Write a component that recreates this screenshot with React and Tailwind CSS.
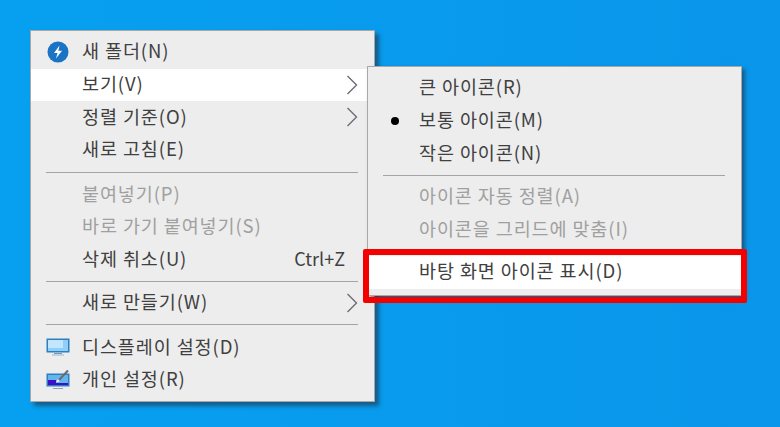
const font = "font-['Noto_Sans_CJK_KR','Noto_Sans',sans-serif]";

function Arrow() {
  return (
    <svg className="mr-[16px] shrink-0" width="12" height="20" viewBox="0 0 12 20" fill="none">
      <path d="M1.5 1 10.5 10 1.5 19" stroke="#6f6a78" strokeWidth="1.4" />
    </svg>
  );
}

function Row({ label, disabled, hot, right, arrow, icon, dot, height = 'h-[32.6px]' }) {
  return (
    <div className={`${height} flex items-center ${hot ? 'bg-white' : ''}`}>
      <div className="flex w-[51px] shrink-0 items-center justify-center pl-[3px]">
        {icon}
        {dot && <span className="h-[8px] w-[8px] rounded-full bg-black" />}
      </div>
      <span className={`flex-1 -translate-y-px whitespace-nowrap text-[18.5px] tracking-[0.9px] ${disabled ? 'text-[#a0a0a0]' : 'text-[#404040]'}`}>
        {label}
      </span>
      {right && <span className="mr-[29px] -translate-y-px text-[18px] text-[#404040]">{right}</span>}
      {arrow && <Arrow />}
    </div>
  );
}

function Separator({ className = 'my-[5px]' }) {
  return <div className={`${className} ml-[15px] mr-[16px] h-px bg-[#a4a4a4]`} />;
}

function ShieldIcon() {
  return (
    <svg width="22" height="22" viewBox="0 0 22 22">
      <circle cx="11" cy="11" r="10.5" fill="#1a73c4" />
      <path d="M12.5 4.5 7 12h3.5L9 17.5 15 9.8h-3.6z" fill="#fff" />
    </svg>
  );
}

function DisplayIcon() {
  return (
    <svg width="24" height="20" viewBox="0 0 24 20">
      <rect x="0.5" y="1.5" width="23" height="14" fill="#2f7fc0" />
      <rect x="2" y="3" width="20" height="11" fill="#8fd0fa" />
      <rect x="2" y="3" width="15" height="8" fill="#c2e6fd" />
      <rect x="8" y="16" width="8" height="1" fill="#7a9cb8" />
      <rect x="6" y="17.5" width="12" height="1" fill="#9fb4c6" />
    </svg>
  );
}

function PersonalizeIcon() {
  return (
    <svg width="24" height="22" viewBox="0 0 24 22">
      <rect x="0.5" y="4.5" width="23" height="13" fill="#2f7fc0" />
      <rect x="2" y="6" width="20" height="10" fill="#63b5ee" />
      <rect x="2" y="11" width="8" height="5" fill="#3a10c8" />
      <rect x="10" y="14" width="12" height="2" fill="#3a10c8" />
      <path d="M10 13.5 12 10l2 2z" fill="#fff" />
      <path d="M13 11 22 1.5" stroke="#6b6b6b" strokeWidth="2" />
      <rect x="7" y="19" width="10" height="1" fill="#8aa3b8" />
    </svg>
  );
}

export default function App() {
  return (
    <div className={`${font} relative h-[427px] w-[780px] overflow-hidden bg-gradient-to-r from-[#07a0f0] to-[#0a96ea]`}>
      <div className="absolute left-[30px] top-[30px] w-[345px] border border-[#a8a8a8] bg-[#ededed] pb-[5px] pt-[5px] shadow-[4px_4px_4px_rgba(30,50,70,0.6)]">
        <Row label="새 폴더(N)" icon={<ShieldIcon />} />
        <Row label="보기(V)" hot arrow />
        <Row label="정렬 기준(O)" arrow />
        <Row label="새로 고침(E)" />
        <Separator className="mb-[5px] mt-[6px]" />
        <Row label="붙여넣기(P)" disabled />
        <Row label="바로 가기 붙여넣기(S)" disabled />
        <Row label="삭제 취소(U)" right="Ctrl+Z" />
        <Separator />
        <Row label="새로 만들기(W)" arrow height="h-[32px]" />
        <Separator className="mb-[6px] mt-[5px]" />
        <Row label="디스플레이 설정(D)" icon={<DisplayIcon />} />
        <Row label="개인 설정(R)" icon={<PersonalizeIcon />} />
      </div>

      <div className="absolute left-[367px] top-[66px] w-[375px] border border-[#a8a8a8] bg-[#ededed] pb-[6px] pt-[5px] shadow-[3px_3px_4px_rgba(30,50,70,0.6)]">
        <Row label="큰 아이콘(R)" />
        <Row label="보통 아이콘(M)" dot />
        <Row label="작은 아이콘(N)" />
        <Separator />
        <Row label="아이콘 자동 정렬(A)" disabled />
        <Row label="아이콘을 그리드에 맞춤(I)" disabled />
        <div className="mt-[10px]">
          <Row label="바탕 화면 아이콘 표시(D)" hot />
        </div>
      </div>

      <div className="absolute left-[363px] top-[249px] h-[54px] w-[384px] rounded-[2px] border-[6px] border-[#f30000]" />
    </div>
  );
}
